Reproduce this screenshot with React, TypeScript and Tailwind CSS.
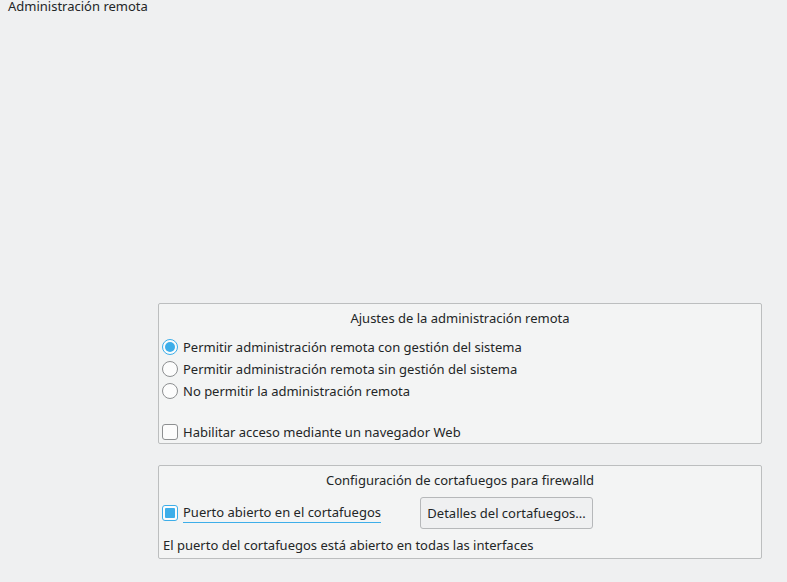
const Radio = ({ checked }: { checked?: boolean }) => (
  <span
    className={
      'flex h-[16px] w-[16px] shrink-0 items-center justify-center rounded-full border bg-[#fcfcfc] ' +
      (checked ? 'border-[#3daee9]' : 'border-[#8d8f91]')
    }
  >
    {checked && <span className="h-[10px] w-[10px] rounded-full bg-[#3daee9]" />}
  </span>
);

const Check = ({ checked }: { checked?: boolean }) => (
  <span
    className={
      'flex h-[16px] w-[16px] shrink-0 items-center justify-center rounded-[3px] border bg-[#fcfcfc] ' +
      (checked ? 'border-[#3daee9]' : 'border-[#8d8f91]')
    }
  >
    {checked && <span className="h-[10px] w-[10px] rounded-[1px] bg-[#3daee9]" />}
  </span>
);

const Row = ({ children, control }: { children: React.ReactNode; control: React.ReactNode }) => (
  <div className="flex h-[22px] items-center gap-[5px] pl-[3px]">
    {control}
    <span>{children}</span>
  </div>
);

export default function App() {
  return (
    <div
      className="flex h-[582px] w-[787px] flex-col bg-[#eff0f1] text-[13px] leading-[18px] text-[#232627]"
      style={{ fontFamily: '"Noto Sans", sans-serif' }}
    >
      <div className="h-[12px] pl-[8px] leading-[12px]">Administración remota</div>

      <div className="ml-[158px] mt-[291px] flex h-[141px] w-[604px] flex-col rounded-[2px] border border-[#bcbebf] bg-[#f3f4f4]">
        <div className="mt-[5px] text-center">Ajustes de la administración remota</div>
        <div className="mt-[9px] flex flex-col">
          <Row control={<Radio checked />}>Permitir administración remota con gestión del sistema</Row>
          <Row control={<Radio />}>Permitir administración remota sin gestión del sistema</Row>
          <Row control={<Radio />}>No permitir la administración remota</Row>
        </div>
        <div className="mt-[19px]">
          <Row control={<Check />}>Habilitar acceso mediante un navegador Web</Row>
        </div>
      </div>

      <div className="ml-[158px] mt-[21px] flex h-[94px] w-[604px] flex-col rounded-[2px] border border-[#bcbebf] bg-[#f3f4f4]">
        <div className="mt-[5px] text-center">Configuración de cortafuegos para firewalld</div>
        <div className="mt-[8px] flex h-[32px] items-center">
          <div className="flex items-center gap-[5px] pl-[3px]">
            <Check checked />
            <span className="border-b border-[#3daee9] pb-[1px]">Puerto abierto en el cortafuegos</span>
          </div>
          <button className="ml-[39px] flex h-[32px] w-[173px] items-center justify-center rounded-[3px] border border-[#b6b8ba] bg-[#eff0f1] text-[#232627]">
            Detalles del cortafuegos...
          </button>
        </div>
        <div className="mt-[7px] pl-[4px]">El puerto del cortafuegos está abierto en todas las interfaces</div>
      </div>
    </div>
  );
}
